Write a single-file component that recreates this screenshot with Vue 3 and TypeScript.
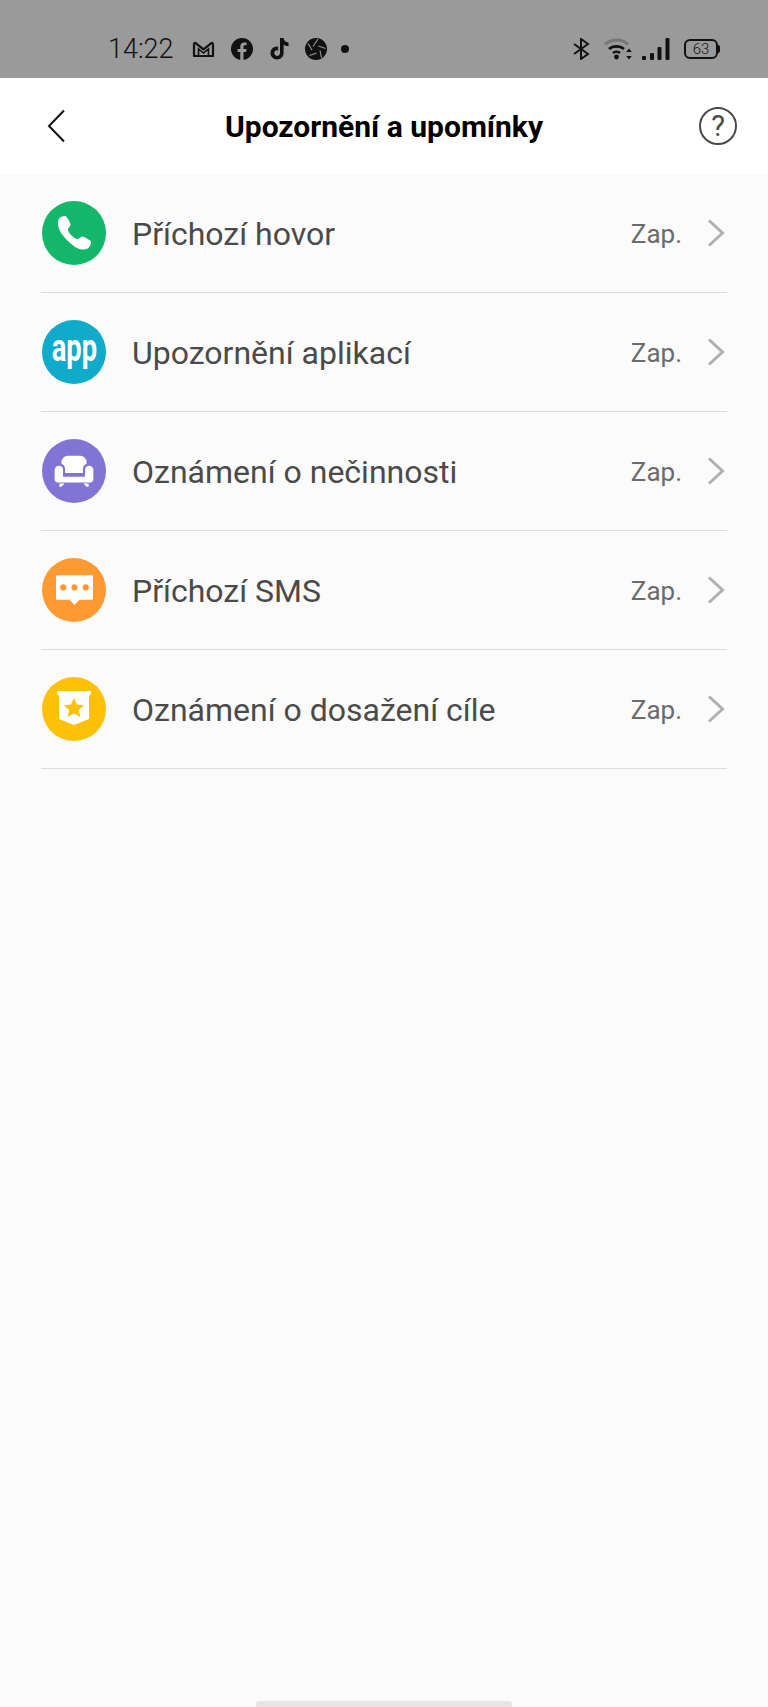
<template>
  <div class="page">
    <div class="status">
      <span class="time">14:22</span>
      <div class="notif">
        <svg class="gm" width="23" height="17" viewBox="0 0 23 17"><path d="M2 15V3.500C2 2 3 1.500 4 2.300l7.500 6 7.500-6c1-.8 2-.3 2 1.200V15z" fill="none" stroke="#111" stroke-width="2.200" stroke-linejoin="round"/><path d="M6.500 14V8l5 4 5-4v6" fill="none" stroke="#111" stroke-width="1.600"/></svg>
        <svg width="22" height="22" viewBox="0 0 22 22"><circle cx="11" cy="11" r="11" fill="#111"/><path d="M9.300 22v-8H6.600v-3.100h2.700V8.600c0-2.700 1.600-4.100 4-4.100 1.100 0 2 .1 2.300.1v2.700h-1.600c-1.300 0-1.500.6-1.500 1.500v2.100h3l-.4 3.100h-2.600v8z" fill="#9a9a9a"/></svg>
        <svg width="22" height="24" viewBox="0 0 22 24"><path d="M12 1h3.600c.3 2.600 2 4.300 4.900 4.600v3.600c-1.900 0-3.500-.6-4.900-1.600v8.200c0 4-3 6.700-6.600 6.700-3.800 0-6.500-3-6.500-6.500 0-3.900 3.400-7 7.600-6.400v3.800c-2-.6-3.900.7-3.900 2.700 0 1.600 1.300 2.800 2.800 2.800 1.700 0 3-1.200 3-3.200z" fill="#111"/></svg>
        <svg width="22" height="22" viewBox="0 0 22 22"><circle cx="11" cy="11" r="11" fill="#111"/><path d="M8 8.500L13 1M13.500 8l7 2.500M15 12.500l1.500 7.500M11.500 15l-7 2.500M7 12L3 5.500" stroke="#9a9a9a" stroke-width="1.100" fill="none"/></svg>
        <span class="dot"></span>
      </div>
      <div class="sys">
        <svg width="17" height="22" viewBox="0 0 17 22"><path d="M1 6l14 10-7 5V1l7 5L1 16" fill="none" stroke="#111" stroke-width="2"/></svg>
        <svg class="wifi" width="28" height="22" viewBox="0 0 28 22"><path d="M1 6.500c6-6 17-6 23 0" fill="none" stroke="#777" stroke-width="3"/><path d="M5 11c4-3.500 11-3.500 15 0M9 15c2-1.700 5-1.700 7 0" fill="none" stroke="#111" stroke-width="2.600"/><circle cx="12.500" cy="19" r="2.400" fill="#111"/><path d="M25 10.500l2.800 3.500h-5.600zM25 21.500l2.800-3.500h-5.600z" fill="#111"/></svg>
        <svg class="signal" width="28" height="22" viewBox="0 0 28 22"><rect x="0" y="18" width="4" height="4" rx="1"/><rect x="8" y="15" width="4" height="7" rx="1"/><rect x="15.500" y="9" width="4" height="13" rx="1"/><rect x="23.500" y="0" width="4" height="22" rx="1"/></svg>
        <div class="battery"><span>63</span></div>
      </div>
    </div>

    <header class="head">
      <svg class="back" width="20" height="34" viewBox="0 0 20 34"><path d="M17 1.500L2 17l15 15.500" fill="none" stroke="#111" stroke-width="2"/></svg>
      <h1>Upozornění a upomínky</h1>
      <div class="help">?</div>
    </header>

    <ul class="list">
      <li v-for="row in rows" :key="row.label" class="row">
        <span class="icon" :style="{ background: row.color }">
          <svg v-if="row.kind === 'phone'" width="46" height="46" viewBox="0 0 40 40"><path d="M7 7.500c1-1.500 4.500-3 6-2 1 .7 3.900 5.800 4 7.300.1 1.500-2.300 2.700-2.300 4.200 0 2.700 5.600 8.300 8.300 8.300 1.500 0 2.700-2.400 4.200-2.300 1.500.1 6.600 3 7.300 4 1 1.500-.5 5-2 6-2 1.400-6 2-9.500.3C18 30.500 10 23 7.500 17.500 5.700 13.500 5.500 9.600 7 7.500z" fill="#fff"/></svg>
          <span v-else-if="row.kind === 'app'" class="app">app</span>
          <svg v-else-if="row.kind === 'sofa'" width="46" height="46" viewBox="0 0 44 44"><path d="M10 15v-1.500a6 6 0 0 1 6-6h12a6 6 0 0 1 6 6V15a6 6 0 0 0-3.500 5.500V24h-17v-3.500A6 6 0 0 0 10 15z" fill="#fff"/><path d="M8 17a4 4 0 0 1 3.500 4v6.500h21V21a4 4 0 0 1 8 0v9a3 3 0 0 1-3 3H6.500a3 3 0 0 1-3-3v-9A4 4 0 0 1 8 17z" fill="#fff"/><path d="M8 34h5l-3 3H8zM31 34h5v3h-2z" fill="#fff"/></svg>
          <svg v-else-if="row.kind === 'sms'" width="41" height="41" viewBox="0 0 40 40"><path d="M3 5h34a1 1 0 0 1 1 1v22a1 1 0 0 1-1 1H25l-5 5-5-5H3a1 1 0 0 1-1-1V6a1 1 0 0 1 1-1z" fill="#fff"/><circle cx="9" cy="17" r="3" fill="#ff9a33"/><circle cx="20" cy="17" r="3" fill="#ff9a33"/><circle cx="31" cy="17" r="3" fill="#ff9a33"/></svg>
          <svg v-else width="40" height="44" viewBox="0 0 40 44"><path d="M3 4h34v3l-2 2v23L20 38 5 32V9L3 7z" fill="#fff"/><path d="M20 11l3 6.500 7 .8-5.200 4.700 1.500 7L20 26.500 13.700 30l1.500-7-5.200-4.700 7-.8z" fill="#ffc107"/></svg>
        </span>
        <span class="label">{{ row.label }}</span>
        <span class="value">Zap.</span>
        <svg class="chev" width="18" height="28" viewBox="0 0 18 28"><path d="M2 1.500L15.500 14 2 26.500" fill="none" stroke="#b0b0b0" stroke-width="3"/></svg>
      </li>
    </ul>

    <div class="homebar"></div>
  </div>
</template>

<script setup lang="ts">
const rows = [
  { label: 'Příchozí hovor', color: '#12b76a', kind: 'phone' },
  { label: 'Upozornění aplikací', color: '#10aacb', kind: 'app' },
  { label: 'Oznámení o nečinnosti', color: '#8274d4', kind: 'sofa' },
  { label: 'Příchozí SMS', color: '#ff9a33', kind: 'sms' },
  { label: 'Oznámení o dosažení cíle', color: '#ffc107', kind: 'goal' },
]
</script>

<style>
body {
  margin: 0;
  background: #fbfbfb;
}
</style>

<style scoped>
.page {
  height: 1707px;
  background: #fbfbfb;
  display: flex;
  flex-direction: column;
  font-family: Roboto, "Liberation Sans", sans-serif;
  overflow: hidden;
}
.status {
  height: 78px;
  flex: none;
  background: #9a9a9a;
  display: flex;
  align-items: center;
  padding: 20px 50px 0 108px;
  box-sizing: border-box;
  color: #111;
}
.time {
  font-size: 27px;
  font-weight: 300;
  width: 84px;
}
.notif {
  display: flex;
  align-items: center;
  gap: 15px;
}
.gm {
  margin-right: 1px;
}
.dot {
  width: 8px;
  height: 8px;
  border-radius: 50%;
  background: #111;
  margin-left: -1px;
}
.sys {
  display: flex;
  align-items: center;
  margin-left: auto;
  gap: 13px;
}
.wifi {
  margin-left: 1px;
}
.signal {
  fill: #111;
  margin-left: -3px;
}
.battery {
  width: 34px;
  height: 20px;
  box-sizing: border-box;
  border: 2px solid #111;
  border-radius: 6px;
  margin-left: 1px;
  position: relative;
  display: flex;
  align-items: center;
  justify-content: center;
  font-size: 15px;
  font-weight: 300;
}
.battery::after {
  content: "";
  position: absolute;
  right: -4px;
  top: 4px;
  width: 2px;
  height: 8px;
  background: #111;
  border-radius: 0 2px 2px 0;
}
.head {
  height: 96px;
  flex: none;
  background: #fff;
  display: flex;
  align-items: center;
  justify-content: space-between;
  padding: 0 31px 0 47px;
  position: relative;
}
.head h1 {
  position: absolute;
  left: 0;
  right: 0;
  margin: 0;
  text-align: center;
  font-size: 30px;
  font-weight: 700;
  color: #000;
}
.help {
  width: 38px;
  height: 38px;
  box-sizing: border-box;
  border: 2.500px solid #4a4a4a;
  border-radius: 50%;
  display: flex;
  align-items: center;
  justify-content: center;
  font-size: 29px;
  color: #4a4a4a;
}
.list {
  list-style: none;
  margin: 0;
  padding: 0 41px 0 41px;
}
.row {
  height: 119px;
  box-sizing: border-box;
  border-bottom: 1px solid #dcdcdc;
  display: flex;
  align-items: center;
  padding-left: 1px;
  padding-right: 2px;
}
.icon {
  width: 64px;
  height: 64px;
  flex: none;
  border-radius: 50%;
  display: flex;
  align-items: center;
  justify-content: center;
}
.app {
  color: #fff;
  font-size: 39px;
  font-weight: 700;
  line-height: 1;
  margin-top: -7px;
  transform: scaleX(0.7);
}
.label {
  margin-left: 26px;
  flex: 1;
  font-size: 32px;
  color: #4a4a4a;
  margin-top: 2px;
}
.value {
  font-size: 26px;
  color: #6b6b6b;
  margin-top: 2px;
}
.chev {
  margin-left: 25px;
}
.homebar {
  position: absolute;
  left: 256px;
  top: 1701px;
  width: 256px;
  height: 6px;
  background: #e6e6e6;
  border-radius: 3px 3px 0 0;
}
</style>
